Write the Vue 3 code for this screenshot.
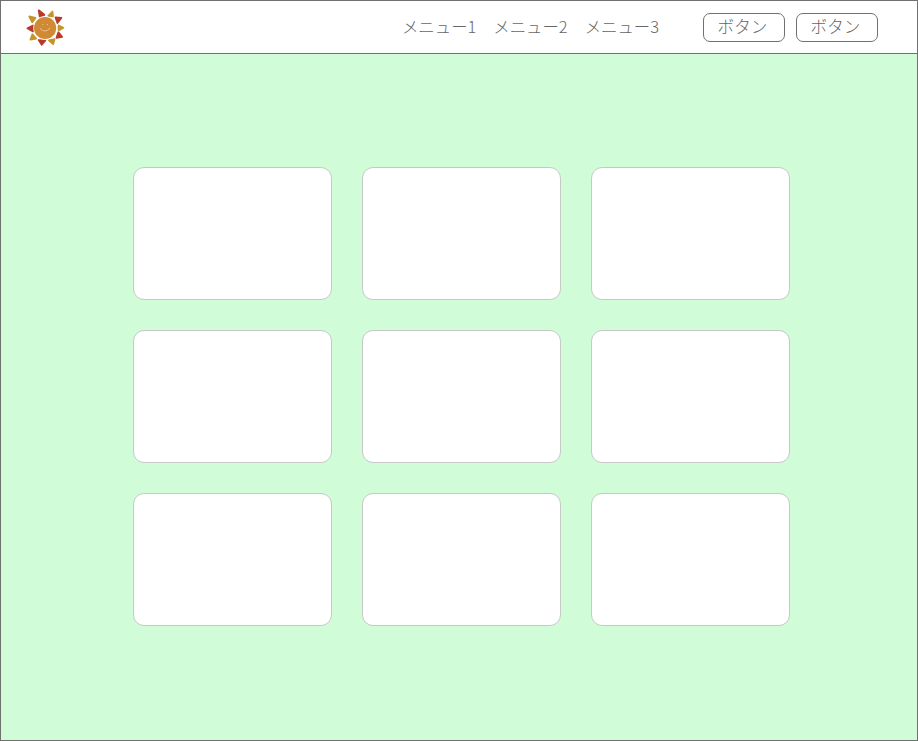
<script setup>
const shrink = (pts) => {
  const cx = (pts[0][0] + pts[1][0] + pts[2][0]) / 3
  const cy = (pts[0][1] + pts[1][1] + pts[2][1]) / 3
  return pts.map(([x, y]) => `${cx + (x - cx) * 0.84},${cy + (y - cy) * 0.84}`).join(' ')
}
const rays = [
  { p: [[38.3, 8.6], [45, 14], [39.5, 16]], c: '#b93a2a' },
  { p: [[52.7, 10], [53.3, 15.7], [47.7, 15]], c: '#c4952b' },
  { p: [[55, 16], [62, 16.7], [57.3, 22.7]], c: '#b93a2a' },
  { p: [[58.3, 24], [64, 26.7], [58.3, 30]], c: '#c4952b' },
  { p: [[58.3, 30.7], [62.7, 36], [56, 37.3]], c: '#b93a2a' },
  { p: [[48.3, 39.3], [55, 37.7], [53.3, 43.7]], c: '#c4952b' },
  { p: [[38, 38.7], [46, 39.3], [41.7, 44.3]], c: '#b93a2a' },
  { p: [[32.3, 32.7], [36.7, 37.7], [30, 39]], c: '#c4952b' },
  { p: [[33.3, 24], [33.3, 31], [26.7, 27.3]], c: '#b93a2a' },
  { p: [[28.7, 15], [36, 16.7], [32.3, 22]], c: '#c4952b' }
].map((r) => ({ p: shrink(r.p), c: r.c }))
const menus = ['メニュー1', 'メニュー2', 'メニュー3']
const buttons = ['ボタン', 'ボタン']
const cards = 9
</script>

<template>
  <div class="page">
    <header class="header">
      <svg class="logo" viewBox="24 6 42 42" width="42" height="42" aria-label="logo">
        <polygon
          v-for="(r, i) in rays"
          :key="i"
          :points="r.p"
          :fill="r.c"
          :stroke="r.c"
          stroke-width="1.8"
          stroke-linejoin="round"
        />
        <circle cx="45.1" cy="27" r="11.8" fill="#fff" />
        <circle cx="45.1" cy="27" r="11.1" fill="#d08a35" />
        <circle cx="42.8" cy="23.6" r="0.5" fill="#f3d9a8" />
        <circle cx="47.4" cy="23.6" r="0.5" fill="#f3d9a8" />
        <path d="M40.2 27.6 Q45 33 50 27.2" fill="none" stroke="#f3d9a8" stroke-width="0.7" stroke-linecap="round" />
      </svg>
      <nav class="nav">
        <span v-for="m in menus" :key="m" class="menu">{{ m }}</span>
      </nav>
      <div class="actions">
        <button v-for="(b, i) in buttons" :key="i" class="btn" type="button">{{ b }}</button>
      </div>
    </header>
    <main class="main">
      <div class="grid">
        <div v-for="n in cards" :key="n" class="card"></div>
      </div>
    </main>
  </div>
</template>

<style scoped>
.page {
  box-sizing: border-box;
  width: 918px;
  height: 741px;
  border: 1px solid #707070;
  display: flex;
  flex-direction: column;
  font-family: "Noto Sans CJK JP", "Noto Sans", sans-serif;
  font-weight: 300;
  color: #666;
  background: #d0fdd7;
}
.header {
  box-sizing: border-box;
  height: 53px;
  flex: none;
  background: #fff;
  border-bottom: 1px solid #707070;
  display: flex;
  align-items: center;
  padding: 0 39px 0 23px;
}
.logo {
  display: block;
  margin-top: 1px;
}
.nav {
  margin-left: auto;
  display: flex;
  gap: 17px;
  font-size: 16.4px;
  padding-bottom: 2px;
}
.menu {
  line-height: 24px;
  white-space: nowrap;
}
.actions {
  margin-left: 44px;
  display: flex;
  gap: 11px;
}
.btn {
  box-sizing: border-box;
  width: 82px;
  height: 29px;
  padding: 0 3px 1px 0;
  background: #fff;
  border: 1px solid #707070;
  border-radius: 7px;
  font: inherit;
  font-size: 16.6px;
  color: #666;
  line-height: 1;
}
.main {
  flex: 1;
  padding: 113px 0 0 132px;
}
.grid {
  display: grid;
  grid-template-columns: repeat(3, 199px);
  grid-auto-rows: 133px;
  gap: 30px;
}
.card {
  box-sizing: border-box;
  background: #fff;
  border: 1px solid #c8c8c8;
  border-radius: 11px;
}
</style>
